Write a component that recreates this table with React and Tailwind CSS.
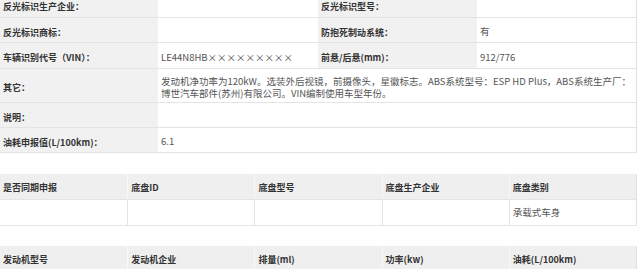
import React from "react";

const L = "text-[9px] font-bold text-[#333] pl-[3px]";
const V = "text-[9.5px] text-[#555] pl-[3px]";

function Row({ h, children }) {
  return <div className={`flex border-b border-[#e4e4e4] ${h}`}>{children}</div>;
}

function Label({ w, children }) {
  return (
    <div className={`${w} shrink-0 bg-[#f1f1f1] flex items-center pt-[4px] ${L}`}>{children}</div>
  );
}

function Value({ w, children }) {
  return <div className={`${w} flex items-center pt-[4px] ${V}`}>{children}</div>;
}

export default function App() {
  const h2 = ["是否同期申报", "底盘ID", "底盘型号", "底盘生产企业", "底盘类别"];
  const d2 = ["", "", "", "", "承载式车身"];
  const h3 = ["发动机型号", "发动机企业", "排量(ml)", "功率(kw)", "油耗(L/100km)"];
  return (
    <div className="w-[640px] h-[269px] overflow-hidden bg-white font-['Noto_Sans_CJK_SC',sans-serif] leading-none">
      <div className="w-[637px] -mt-[8px] border-r border-[#e0e0e0]">
        <Row h="h-[26px]">
          <Label w="w-[158px]">反光标识生产企业：</Label>
          <Value w="w-[160px]"></Value>
          <Label w="w-[159px]">反光标识型号：</Label>
          <Value w="flex-1"></Value>
        </Row>
        <Row h="h-[25px]">
          <Label w="w-[158px]">反光标识商标：</Label>
          <Value w="w-[160px]"></Value>
          <Label w="w-[159px]">防抱死制动系统：</Label>
          <Value w="flex-1">有</Value>
        </Row>
        <Row h="h-[26px]">
          <Label w="w-[158px]">车辆识别代号（VIN）：</Label>
          <Value w="w-[160px]">LE44N8HB×××××××××</Value>
          <Label w="w-[159px]">前悬/后悬(mm)：</Label>
          <Value w="flex-1">912/776</Value>
        </Row>
        <Row h="h-[34px]">
          <Label w="w-[158px]">其它：</Label>
          <div className={`flex-1 flex flex-col justify-center pt-[3px] leading-[12px] whitespace-nowrap ${V}`}>
            <span>发动机净功率为120kW。选装外后视镜，前摄像头，星徽标志。ABS系统型号：ESP HD Plus，ABS系统生产厂：</span>
            <span>博世汽车部件(苏州)有限公司。VIN编制使用车型年份。</span>
          </div>
        </Row>
        <Row h="h-[25px]">
          <Label w="w-[158px]">说明：</Label>
          <Value w="flex-1"></Value>
        </Row>
        <Row h="h-[25px]">
          <Label w="w-[158px]">油耗申报值(L/100km)：</Label>
          <Value w="flex-1">6.1</Value>
        </Row>
      </div>

      <div className="mt-[21px] w-[637px] border-r border-[#e0e0e0]">
        <div className="grid grid-cols-5 h-[26px] bg-[#efefef] border-b border-[#e4e4e4]">
          {h2.map((t, i) => (
            <div key={i} className={`flex items-center pt-[1px] ${L} ${i > 0 ? "border-l border-[#f8f8f8]" : ""}`}>{t}</div>
          ))}
        </div>
        <div className="grid grid-cols-5 h-[26px] border-b border-[#e4e4e4]">
          {d2.map((t, i) => (
            <div key={i} className={`flex items-center pt-[1px] ${V} ${i > 0 ? "border-l border-[#e4e4e4]" : ""}`}>{t}</div>
          ))}
        </div>
      </div>

      <div className="mt-[20px] w-[637px] border-r border-[#e0e0e0]">
        <div className="grid grid-cols-5 h-[26px] bg-[#efefef] border-b border-[#e4e4e4]">
          {h3.map((t, i) => (
            <div key={i} className={`flex items-center pt-[1px] ${L} ${i > 0 ? "border-l border-[#f8f8f8]" : ""}`}>{t}</div>
          ))}
        </div>
      </div>
    </div>
  );
}
